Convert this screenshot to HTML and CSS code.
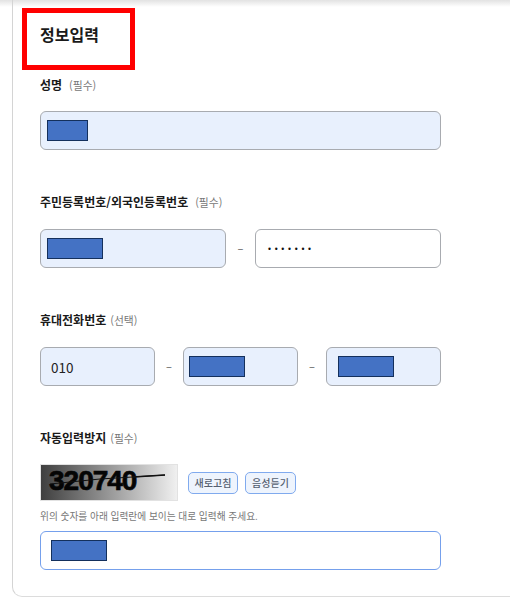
FILE: index.html
```html
<!DOCTYPE html>
<html lang="ko">
<head>
<meta charset="utf-8">
<title>정보입력</title>
<link rel="stylesheet" href="styles.css">
</head>
<body>
<div class="topshade"></div>
<main class="card">
  <div class="title-wrap">
    <h1 class="title">정보입력</h1>
    <div class="highlight"></div>
  </div>

  <section class="group group-name">
    <div class="label"><b>성명</b><span class="note note-wide">(필수)</span></div>
    <div class="field fill pad6"><span class="mask w41"></span></div>
  </section>

  <section class="group group-id">
    <div class="label"><b>주민등록번호/외국인등록번호</b><span class="note note-wide">(필수)</span></div>
    <div class="row row-two">
      <div class="field fill pad6"><span class="mask w55"></span></div>
      <span class="dash">–</span>
      <div class="field pad12"><span class="dots">•••••••</span></div>
    </div>
  </section>

  <section class="group group-phone">
    <div class="label"><b>휴대전화번호</b><span class="note">(선택)</span></div>
    <div class="row row-three">
      <div class="field fill pad10"><span class="value">010</span></div>
      <span class="dash">–</span>
      <div class="field fill pad5"><span class="mask w55"></span></div>
      <span class="dash">–</span>
      <div class="field fill pad11"><span class="mask w55"></span></div>
    </div>
  </section>

  <section class="group group-captcha">
    <div class="label"><b>자동입력방지</b><span class="note">(필수)</span></div>
    <div class="captcha-row">
      <div class="captcha">
        <span class="digits">320740</span>
        <svg class="scratch" width="138" height="37" viewBox="0 0 138 37"><path d="M10 20 L60 15 L125 11" fill="none" stroke="#111" stroke-width="1"/><path d="M93 13 L125 11" fill="none" stroke="#111" stroke-width="1.6"/></svg>
      </div>
      <button class="btn" type="button">새로고침</button>
      <button class="btn" type="button">음성듣기</button>
    </div>
    <p class="hint">위의 숫자를 아래 입력란에 보이는 대로 입력해 주세요.</p>
    <div class="field focus pad10"><span class="mask w55"></span></div>
  </section>
</main>
</body>
</html>
```
FILE: styles.css
```css
* { box-sizing: border-box; }
html, body { margin: 0; padding: 0; height: 100%; background: #fff; overflow: hidden; }
body { font-family: "Noto Sans CJK KR", "Noto Sans", sans-serif; color: #222; }

.topshade {
  position: absolute; top: 0; left: 0; right: 0; height: 7px;
  background: linear-gradient(#e2e2e2, #ffffff);
}

.card {
  position: relative;
  margin-left: 12px;
  height: 597px;
  padding-left: 27px;
  border-left: 1px solid #d4d4d4;
  border-bottom: 1px solid #dcdcdc;
  border-bottom-left-radius: 10px;
}

.title-wrap { position: relative; height: 69px; padding-top: 23px; }
.title { margin: 0; font-size: 16px; line-height: 22px; font-weight: 700; color: #1a1a1a; }
.highlight {
  position: absolute; left: -18px; top: 8px;
  width: 113px; height: 62px;
  border: 5px solid #ff0000;
}

.group { width: 401px; }
.group-name { padding-top: 7px; }
.group-id, .group-phone, .group-captcha { padding-top: 43px; }

.label { height: 18px; line-height: 18px; font-size: 12px; margin-bottom: 17px; display: flex; align-items: center; }
.label b { font-weight: 700; color: #1a1a1a; }
.note { margin-left: 4px; font-size: 10.8px; color: #777; }
.note-wide { margin-left: 7px; }

.row { display: grid; align-items: center; }
.label + .row { margin-top: 18px; }
.group .label:has(+ .row) { margin-bottom: 0; }
.row-two { grid-template-columns: 186px 29px 186px; }
.row-three { grid-template-columns: 115px 28px 115px 28px 115px; }
.dash { text-align: center; color: #555; font-size: 11px; line-height: 16px; margin-top: -2px; }

.field {
  height: 39px;
  display: flex; align-items: center;
  border: 1px solid #a8abb0;
  border-radius: 6px;
  background: #fff;
}
.fill { background: #e8f0fd; }
.focus { border-color: #75a0ec; }
.pad5 { padding-left: 5px; }
.pad6 { padding-left: 6px; }
.pad10 { padding-left: 10px; }
.pad11 { padding-left: 11px; }
.pad12 { padding-left: 12px; }

.mask { display: block; height: 21px; background: #4472c4; border: 1px solid #14305c; }
.w41 { width: 41px; }
.w55 { width: 56px; }

.value { font-size: 13.5px; color: #222; }
.dots { font-family: "Liberation Sans", sans-serif; font-size: 8.5px; letter-spacing: 3.7px; color: #111; }

.captcha-row { display: flex; align-items: center; }
.captcha {
  position: relative;
  width: 138px; height: 37px;
  display: flex; align-items: center;
  padding-left: 8px;
  background: linear-gradient(90deg, #3f3f3f, #f0f0f0);
  border: 1px solid #e2e2e2;
  overflow: hidden;
}
.digits { font-family: "Liberation Sans", sans-serif; font-weight: 700; font-size: 28px; line-height: 28px; margin-top: -4px; letter-spacing: -1px; color: #050505; -webkit-text-stroke: 0.7px #050505; }
.scratch { position: absolute; left: -1px; top: -1px; }

.btn {
  height: 22px; padding: 0;
  width: 50px; margin-left: 10px;
  font: 500 10px "Noto Sans CJK KR", sans-serif;
  color: #556070;
  background: #eef4fd;
  border: 1px solid #80aaee;
  border-radius: 5px;
}
.btn + .btn { margin-left: 7px; width: 51px; }

.hint { margin: 8px 0; height: 14px; line-height: 14px; font-size: 9.7px; color: #777; }
```
